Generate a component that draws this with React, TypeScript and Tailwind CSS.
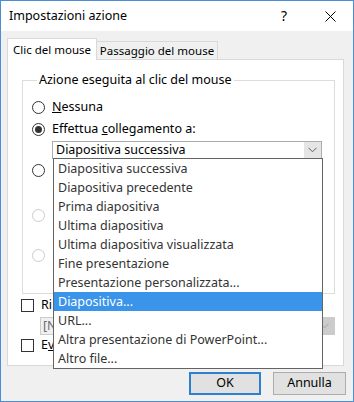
const font = { fontFamily: '"Noto Sans", "Segoe UI", sans-serif' };

const listItems = [
  'Diapositiva successiva',
  'Diapositiva precedente',
  'Prima diapositiva',
  'Ultima diapositiva',
  'Ultima diapositiva visualizzata',
  'Fine presentazione',
  'Presentazione personalizzata...',
  'Diapositiva...',
  'URL...',
  'Altra presentazione di PowerPoint...',
  'Altro file...',
];

function Radio({ checked = false, disabled = false }: { checked?: boolean; disabled?: boolean }) {
  return (
    <span
      className={`flex h-[13px] w-[13px] shrink-0 items-center justify-center rounded-full border bg-white ${
        disabled ? 'border-[#cccccc]' : 'border-[#333333]'
      }`}
    >
      {checked && <span className="h-[7px] w-[7px] rounded-full bg-[#333333]" />}
    </span>
  );
}

function Chevron({ color = '#606060' }: { color?: string }) {
  return (
    <svg width="9" height="6" viewBox="0 0 9 6" fill="none">
      <path d="M0.5 0.8 L4.5 4.8 L8.5 0.8" stroke={color} strokeWidth="1" />
    </svg>
  );
}

export default function App() {
  return (
    <div
      className="relative flex h-[402px] w-[354px] flex-col border border-[#4a8fd6] bg-[#f0f0f0] text-[12.5px] text-black"
      style={font}
    >
      {/* title bar */}
      <div className="flex h-[30px] items-center bg-white pl-[8px]">
        <span className="flex-1 leading-none">Impostazioni azione</span>
        <span className="w-[46px] text-center text-[14px] leading-none">?</span>
        <span className="flex w-[46px] items-center justify-center">
          <svg width="11" height="11" viewBox="0 0 11 11">
            <path d="M0.5 0.5 L10.5 10.5 M10.5 0.5 L0.5 10.5" stroke="#000" strokeWidth="1" />
          </svg>
        </span>
      </div>

      <div className="flex flex-1 flex-col pl-[6px] pr-[9px] pt-[7px]">
        {/* tabs */}
        <div className="flex items-end whitespace-nowrap text-[11.5px]">
          <div className="relative z-10 mb-[-1px] flex h-[22px] w-[90px] shrink-0 items-center justify-center border border-b-0 border-[#d9d9d9] bg-white">
            Clic del mouse
          </div>
          <div className="flex h-[18px] w-[121px] shrink-0 items-center justify-center border border-b-0 border-l-0 border-[#d9d9d9] bg-[#f0f0f0]">
            Passaggio del mouse
          </div>
        </div>

        {/* tab panel */}
        <div className="flex h-[307px] flex-col border border-[#d9d9d9] bg-white pl-[14px] pr-[8px] pt-[12px]">
          <fieldset className="h-[222px] border border-[#dcdcdc] pl-[9px]">
            <legend className="ml-[5px] px-[2px] leading-[16px]">Azione eseguita al clic del mouse</legend>
            <div className="pt-[8px]">
              <div className="flex h-[22px] items-center gap-[7px]">
                <Radio />
                <span>
                  <span className="underline">N</span>essuna
                </span>
              </div>
              <div className="flex h-[22px] items-center gap-[7px]">
                <Radio checked />
                <span>
                  Effettua <span className="underline">c</span>ollegamento a:
                </span>
              </div>
              <div className="ml-[20px] mt-[1px] flex h-[18px] w-[270px] border border-[#adadad] bg-white">
                <span className="flex-1 pl-[3px] leading-[16px]">Diapositiva successiva</span>
                <span className="flex w-[17px] items-center justify-center bg-[#e5e5e5]">
                  <Chevron />
                </span>
              </div>
              <div className="flex h-[22px] items-center">
                <Radio />
              </div>
              <div className="h-[23px]" />
              <div className="flex h-[22px] items-center">
                <Radio disabled />
              </div>
              <div className="h-[18px]" />
              <div className="flex h-[22px] items-center">
                <Radio disabled />
              </div>
            </div>
          </fieldset>

          <div className="mt-[2px] flex h-[18px] items-center gap-[7px]">
            <span className="ml-[-1px] h-[13px] w-[13px] border border-[#333333] bg-white" />
            <span>Ri</span>
          </div>
          <div className="ml-[18px] mt-[3px] flex h-[18px] border border-[#cccccc] bg-[#f0f0f0]">
            <span className="flex-1 pl-[2px] leading-[16px] text-[#6d6d6d]">[N</span>
            <span className="flex w-[20px] items-center justify-center bg-[#cccccc]">
              <Chevron color="#a0a0a0" />
            </span>
          </div>
          <div className="mt-[1px] flex h-[18px] items-center gap-[7px]">
            <span className="ml-[-1px] h-[13px] w-[13px] border border-[#333333] bg-white" />
            <span>
              E<span className="underline">v</span>
            </span>
          </div>
        </div>

        {/* buttons */}
        <div className="mr-[-2px] mt-[6px] flex justify-end gap-[12px]">
          <button className="h-[23px] w-[72px] border-2 border-[#2d7fd0] bg-[#e1e1e1]">OK</button>
          <button className="h-[23px] w-[73px] border border-[#adadad] bg-[#e1e1e1]">Annulla</button>
        </div>
      </div>

      {/* open dropdown list */}
      <div className="absolute left-[52px] top-[157px] w-[270px] border border-[#646464] bg-white">
        {listItems.map((item) => (
          <div
            key={item}
            className={`h-[19px] pl-[4px] leading-[19px] ${
              item === 'Diapositiva...' ? 'bg-[#3a95ea] text-white' : 'text-[#333333]'
            }`}
          >
            {item}
          </div>
        ))}
      </div>
    </div>
  );
}
